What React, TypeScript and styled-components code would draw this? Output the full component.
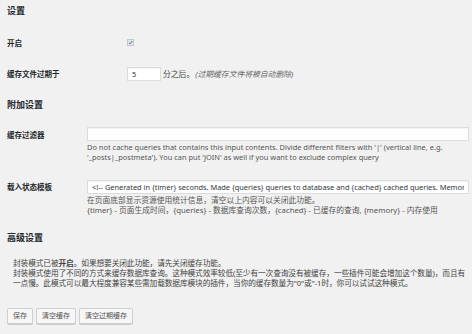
import React from 'react'
import styled, { createGlobalStyle } from 'styled-components'

const GlobalStyle = createGlobalStyle`
  html, body {
    margin: 0;
    padding: 0;
    background: #f1f1f1;
  }
  body {
    font-family: "Noto Sans", "Noto Sans CJK SC", sans-serif;
    color: #444;
  }
`

const Wrap = styled.div`
  width: 472px;
  height: 334px;
  box-sizing: border-box;
  padding: 5px 3px 0 7px;
  overflow: hidden;
`

const Heading = styled.h2<{ top: number }>`
  margin: ${p => p.top}px 0 0;
  font-size: 9px;
  line-height: 12px;
  font-weight: 700;
  color: #23282d;
`

const Row = styled.div<{ labelWidth: number; top?: number }>`
  display: grid;
  grid-template-columns: ${p => p.labelWidth}px 1fr;
  margin-top: ${p => p.top ?? 0}px;
`

const CenterRow = styled(Row)`
  height: 31px;
  align-items: center;
`

const Label = styled.div<{ pad?: number }>`
  font-size: 7.5px;
  line-height: 10px;
  font-weight: 700;
  color: #23282d;
  padding-top: ${p => p.pad ?? 0}px;
`

const Field = styled.div`
  display: flex;
  flex-direction: column;
  min-width: 0;
`

const Inline = styled.div`
  display: flex;
  align-items: center;
  font-size: 7.8px;
  color: #444;
  white-space: nowrap;
`

const Check = styled.span`
  width: 7px;
  height: 7px;
  box-sizing: border-box;
  border: 1px solid #c8c8c8;
  background: #e4e4e4;
  display: inline-flex;
  align-items: center;
  justify-content: center;
`

const Input = styled.input<{ w?: number }>`
  box-sizing: border-box;
  width: ${p => (p.w ? `${p.w}px` : '100%')};
  height: 14px;
  margin: 0;
  padding: 0 4px;
  border: 1px solid #dcdcdc;
  background: #fff;
  font-family: "Noto Sans", "Noto Sans CJK SC", sans-serif;
  font-size: 7.4px;
  color: #32373c;
  box-shadow: inset 0 1px 1px rgba(0, 0, 0, 0.05);
  outline: none;
`

const Note = styled.em`
  margin-left: 1px;
  color: #666;
`

const Desc = styled.div<{ size: number }>`
  margin-top: 1px;
  font-size: ${p => p.size}px;
  line-height: 10px;
  color: #555;
`

const Para = styled.div`
  margin-top: 14px;
  padding: 0 0 0 6px;
  margin-right: -2px;
  font-size: 7.7px;
  letter-spacing: -0.1px;
  line-height: 10px;
  color: #444;
`

const Buttons = styled.div`
  display: flex;
  gap: 3px;
  margin-top: 20px;
`

const Button = styled.button`
  box-sizing: border-box;
  height: 16px;
  padding: 0 5px;
  margin: 0;
  border: 1px solid #cfcfcf;
  border-radius: 2px;
  background: #f7f7f7;
  box-shadow: 0 1px 0 #ccc;
  font-family: "Noto Sans", "Noto Sans CJK SC", sans-serif;
  font-size: 7px;
  color: #555;
  line-height: 14px;
`

export default function App() {
  return (
    <>
      <GlobalStyle />
      <Wrap>
        <Heading top={0}>设置</Heading>
        <CenterRow labelWidth={120} top={10}>
          <Label>开启</Label>
          <Field>
            <Check>
              <svg width="5" height="5" viewBox="0 0 10 10">
                <path d="M2 5.5 L4.2 7.8 L8.2 2" fill="none" stroke="#1e6fc6" strokeWidth="1.8" />
              </svg>
            </Check>
          </Field>
        </CenterRow>
        <CenterRow labelWidth={120}>
          <Label>缓存文件过期于</Label>
          <Inline>
            <Input w={34} defaultValue="5" />
            <span style={{ marginLeft: 2 }}>分之后。</span>
            <Note>(过期缓存文件将被自动删除)</Note>
          </Inline>
        </CenterRow>

        <Heading top={10}>附加设置</Heading>
        <Row labelWidth={80} top={16}>
          <Label pad={3}>缓存过滤器</Label>
          <Field>
            <Input />
            <Desc size={7.45}>
              Do not cache queries that contains this input contents. Divide different filters with '|' (vertical line, e.g.
              '_posts|_postmeta'). You can put 'JOIN' as well if you want to exclude complex query
            </Desc>
          </Field>
        </Row>
        <Row labelWidth={80} top={18}>
          <Label pad={2}>载入状态模板</Label>
          <Field>
            <Input defaultValue="<!-- Generated in {timer} seconds. Made {queries} queries to database and {cached} cached queries. Memory used - {memory} -->" />
            <Desc size={7.75}>
              在页面底部显示资源使用统计信息，清空以上内容可以关闭此功能。
              <br />
              {'{timer} - 页面生成时间，{queries} - 数据库查询次数，{cached} - 已缓存的查询, {memory} - 内存使用'}
            </Desc>
          </Field>
        </Row>

        <Heading top={17}>高级设置</Heading>
        <Para>
          封装模式已被<b>开启</b>。如果想要关闭此功能，请先关闭缓存功能。
          <br />
          封装模式使用了不同的方式来缓存数据库查询。这种模式效率较低(至少有一次查询没有被缓存，一些插件可能会增加这个数量)，而且有一点慢。此模式可以最大程度兼容某些需加载数据库模块的插件，当你的缓存数量为"0"或"-1时，你可以试试这种模式。
        </Para>
        <Buttons>
          <Button>保存</Button>
          <Button>清空缓存</Button>
          <Button>清空过期缓存</Button>
        </Buttons>
      </Wrap>
    </>
  )
}
